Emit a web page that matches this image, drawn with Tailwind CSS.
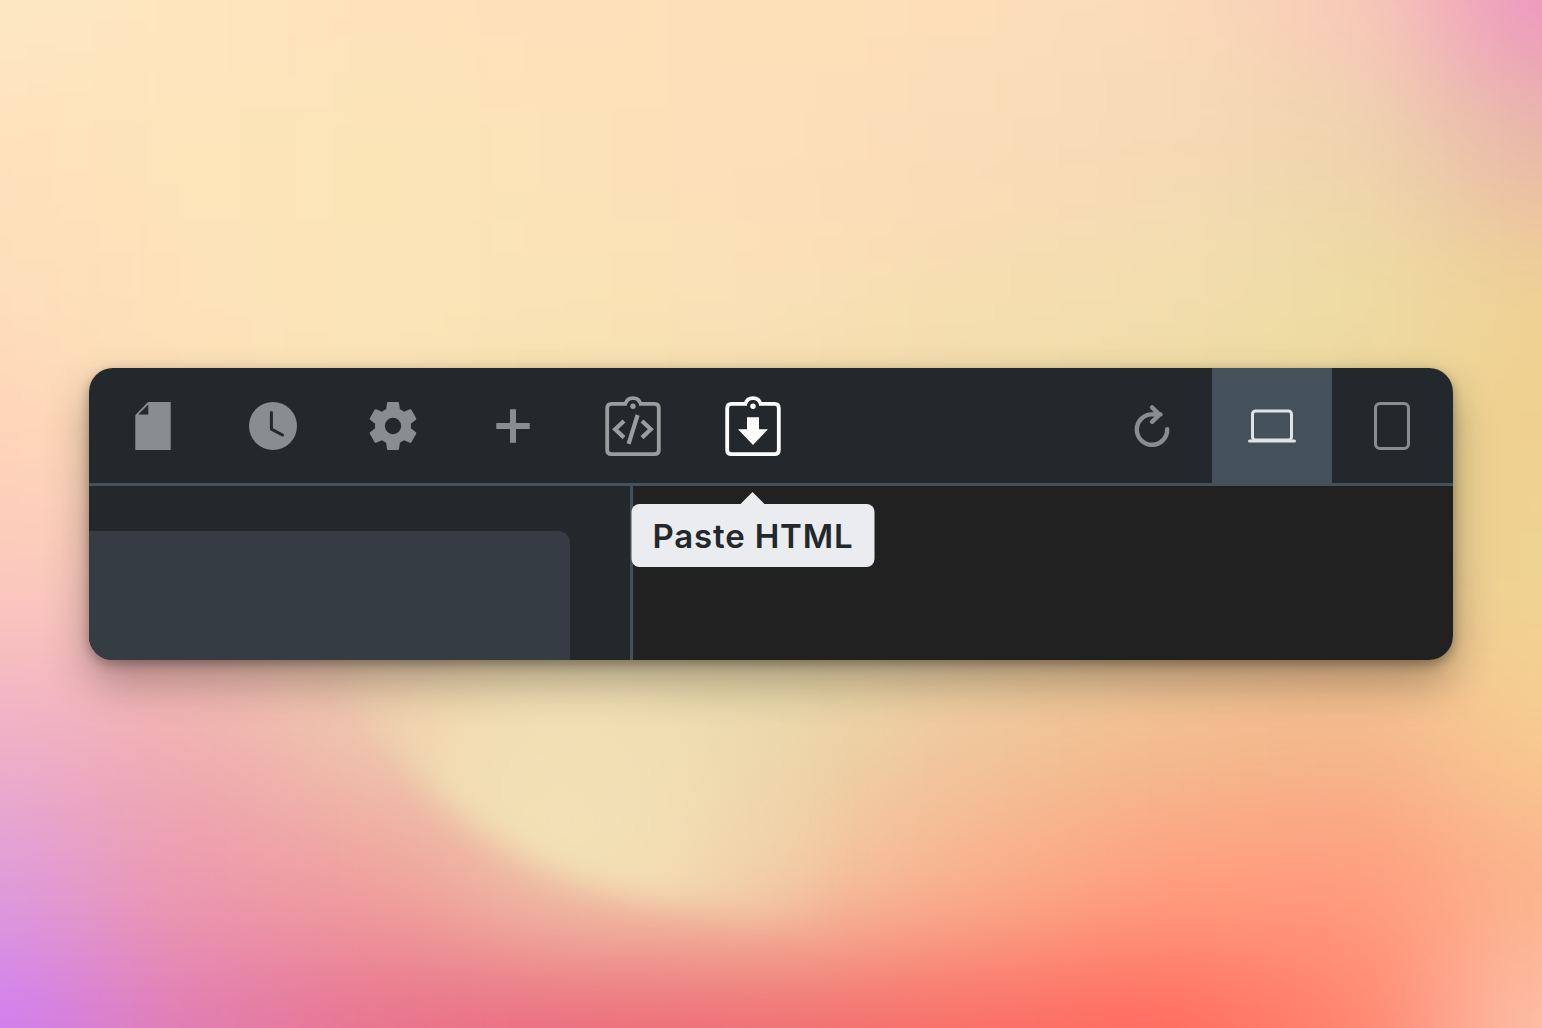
<!DOCTYPE html>
<html lang="en">
<head>
<meta charset="utf-8">
<meta name="viewport" content="width=device-width, initial-scale=1">
<title>Paste HTML</title>
<script src="https://cdn.jsdelivr.net/npm/@tailwindcss/browser@4"></script>
</head>
<body class="relative isolate flex min-h-screen items-center overflow-hidden bg-[#f5dfb0] px-[89px] font-[Inter,sans-serif]">

<!-- Gradient mesh backdrop: coarse colour cells melted together by a blur -->
<svg class="absolute inset-0 -z-10 size-full" viewBox="0 0 1542 1028" preserveAspectRatio="none" aria-hidden="true">
  <defs>
    <filter id="mesh" filterUnits="userSpaceOnUse" x="-400" y="-400" width="2342" height="1828" color-interpolation-filters="sRGB"><feGaussianBlur stdDeviation="70 56"/></filter>
    <filter id="soft" filterUnits="userSpaceOnUse" x="0" y="500" width="1542" height="528" color-interpolation-filters="sRGB"><feGaussianBlur stdDeviation="15"/></filter>
    <radialGradient id="cream" gradientUnits="userSpaceOnUse" cx="560" cy="820" r="290">
      <stop offset="0" stop-color="#f2e2b6"/><stop offset=".4" stop-color="#f3dfb4" stop-opacity=".85"/><stop offset="1" stop-color="#efd6ac" stop-opacity="0"/>
    </radialGradient>
  </defs>
  <g id="cells" filter="url(#mesh)"></g>
  <path filter="url(#soft)" fill="url(#cream)" d="M330 660C380 740 420 785 470 822C530 866 590 888 650 900C720 912 780 925 860 930L960 640Z"/>
</svg>

<main class="relative w-full rounded-3xl shadow-[0_22px_44px_rgba(0,0,0,0.3),0_4px_12px_rgba(0,0,0,0.3)]">
  <div role="toolbar" aria-label="Editor" class="relative z-10 flex h-[118px] rounded-t-3xl border-b-3 border-[#44505a] bg-[#23282c] pr-px pl-1 text-[#8a8d8f]">
    <button type="button" aria-label="Pages" class="flex w-30 items-center justify-center">
      <svg class="size-12" viewBox="0 0 48 48" fill="currentColor"><path fill-rule="evenodd" d="M19 0H41.7V48H6.3V13ZM19.3 2.6V12.6H9.3Z"/></svg>
    </button>
    <button type="button" aria-label="History" class="flex w-30 items-center justify-center">
      <svg class="size-12" viewBox="0 0 48 48"><circle cx="24" cy="24" r="24" fill="currentColor"/><path d="M22.4 10.5V27.2L33.5 33" fill="none" stroke="#23282c" stroke-width="3" stroke-linecap="round" stroke-linejoin="round"/></svg>
    </button>
    <button type="button" aria-label="Settings" class="flex w-30 items-center justify-center">
      <svg class="size-12" viewBox="2 2 20 20" fill="currentColor"><path fill-rule="evenodd" d="M19.43 12.98c.04-.32.07-.64.07-.98s-.03-.66-.07-.98l2.11-1.65c.19-.15.24-.42.12-.64l-2-3.46c-.12-.22-.39-.3-.61-.22l-2.49 1c-.52-.4-1.08-.73-1.69-.98l-.38-2.65C14.46 2.18 14.25 2 14 2h-4c-.25 0-.46.18-.49.42l-.38 2.65c-.61.25-1.17.59-1.69.98l-2.49-1c-.23-.09-.49 0-.61.22l-2 3.46c-.13.22-.07.49.12.64l2.11 1.65c-.04.32-.07.65-.07.98s.03.66.07.98l-2.11 1.65c-.19.15-.24.42-.12.64l2 3.46c.12.22.39.3.61.22l2.49-1c.52.4 1.08.73 1.69.98l.38 2.65c.03.24.24.42.49.42h4c.25 0 .46-.18.49-.42l.38-2.65c.61-.25 1.17-.59 1.69-.98l2.49 1c.23.09.49 0 .61-.22l2-3.46c.12-.22.07-.49-.12-.64l-2.11-1.65zM12 15.4a3.4 3.4 0 1 1 0-6.8 3.4 3.4 0 0 1 0 6.8z"/></svg>
    </button>
    <button type="button" aria-label="Add" class="flex w-30 items-center justify-center">
      <svg class="size-12" viewBox="0 0 48 48" fill="currentColor"><path d="M21 7.3h6V21h13.7v6H27v13.7h-6V27H7.3v-6H21z"/></svg>
    </button>
    <button type="button" aria-label="Copy HTML" class="flex w-30 items-center justify-center text-[#9a9c9e]">
      <svg class="h-15 w-14" viewBox="0 0 56 60" fill="none" stroke="currentColor" stroke-width="3.8"><path d="M20.5 7.8H6.5Q2.2 7.8 2.2 12V54Q2.2 58.1 6.5 58.1H49.5Q53.8 58.1 53.8 54V12Q53.8 7.8 49.5 7.8H35.5C34.6 4.4 31.6 2.1 28 2.1S21.4 4.4 20.5 7.8Z"/><circle cx="28" cy="10.2" r="6" fill="#23282c" stroke="none"/><circle cx="28" cy="10.2" r="2.7" fill="currentColor" stroke="none"/><path stroke-width="4.2" d="M19 25L10.2 33.3L19 41.6M37 25L45.8 33.3L37 41.6M32.6 19L23.6 47.8"/></svg>
    </button>
    <div class="relative flex">
      <button type="button" aria-describedby="tip" aria-label="Paste HTML" class="flex w-30 items-center justify-center text-white">
        <svg class="h-15 w-14" viewBox="0 0 56 60" fill="none" stroke="currentColor" stroke-width="3.8"><path d="M20.5 7.8H6.5Q2.2 7.8 2.2 12V54Q2.2 58.1 6.5 58.1H49.5Q53.8 58.1 53.8 54V12Q53.8 7.8 49.5 7.8H35.5C34.6 4.4 31.6 2.1 28 2.1S21.4 4.4 20.5 7.8Z"/><circle cx="28" cy="10.2" r="6" fill="#23282c" stroke="none"/><circle cx="28" cy="10.2" r="2.7" fill="currentColor" stroke="none"/><path fill="currentColor" stroke="none" d="M22 21.3H34V33.3H43L28 49L13 33.3H22Z"/></svg>
      </button>
      <div id="tip" role="tooltip" class="absolute top-[136px] left-1/2 -translate-x-1/2 rounded-lg bg-[#ebecf0] px-[21px] pt-[13px] pb-[11px] text-[33px] leading-[39px] font-semibold tracking-wide whitespace-nowrap text-[#23282c]">
        <svg class="absolute bottom-full left-1/2 h-3 w-6 -translate-x-1/2" viewBox="0 0 24 12" aria-hidden="true"><path fill="#ebecf0" d="M0 12L12 0L24 12Z"/></svg>
        Paste HTML
      </div>
    </div>
    <button type="button" aria-label="Refresh" class="ml-auto flex w-30 items-center justify-center">
      <svg class="size-12" viewBox="0 0 48 48" fill="none" stroke="currentColor" stroke-width="4.4" stroke-linecap="round" stroke-linejoin="round"><path d="M39.2 27.2A15.2 15.2 0 1 1 24 12.4H32.5M24 5.4L31.5 12.6L24 19.8"/></svg>
    </button>
    <button type="button" aria-label="Desktop view" aria-pressed="true" class="flex w-30 items-center justify-center bg-[#44505a] text-[#dfe3e6]">
      <svg class="size-12" viewBox="0 0 48 48" fill="none" stroke="currentColor" stroke-width="3"><rect x="4.5" y="9" width="39" height="29" rx="3"/><path stroke-linecap="round" d="M1.5 39H46.5"/></svg>
    </button>
    <button type="button" aria-label="Tablet view" class="flex w-30 items-center justify-center">
      <svg class="size-12" viewBox="0 0 48 48" fill="none" stroke="currentColor" stroke-width="3"><rect x="7.5" y="1.5" width="33" height="45" rx="4.5"/></svg>
    </button>
  </div>
  <div class="flex h-[174px] overflow-hidden rounded-b-3xl bg-[#212121]">
    <aside class="flex w-[544px] border-r-3 border-[#44505a] bg-[#23282c] pt-[45px] pr-15">
      <div class="flex-1 rounded-tr-xl bg-[#353c43]"></div>
    </aside>
    <section class="flex-1" aria-label="Canvas"></section>
  </div>
</main>

<script>
  const rows = [
    'fde8c4 fee5bf fee2bc fee1ba fde0b8 fddeb9 fcdbb9 f8cbb8 ed94c0',
    'fee2bc fde4b9 fbe5b7 fce2b8 fddfb9 fbdcb9 f6dab6 efd5ae e8b8a8',
    'fedebb fde3b9 fbe5b8 fae3b6 fae0b7 f6deb0 f3deae eedca4 efd193',
    'fed3b9 fcdfb7 fae4b6 f5dfae f4deae efdca8 ecd9a0 ecd79c f0cf8e',
    'fbc8be f9c8b8 f0d5b0 ebdcae eadcae e8daa8 ebd0a0 efcb98 efd592',
    'f0b0c8 efb0b0 efc8ac e8deb0 ead9ac f0c79c f2be90 f4b88c f8cc92',
    'de9ddc ee9aac f0a29c f0c8a8 f4cca6 f9b28e ffa080 ff9c7e fbb48c',
    'ce7ef4 e27cb0 e9718c ec6a7c ef6c72 fa6c66 ff685e ff826e fdc2aa'
  ].map(r => r.split(' '));
  const w = 193, h = 147, cells = document.getElementById('cells');
  for (let r = -2; r < rows.length + 2; r++) for (let c = -2; c < 11; c++) {
    const rect = document.createElementNS('http://www.w3.org/2000/svg', 'rect');
    const row = rows[Math.min(Math.max(r, 0), rows.length - 1)];
    rect.setAttribute('x', (c - .5) * w);
    rect.setAttribute('y', (r - .5) * h);
    rect.setAttribute('width', w + 1);
    rect.setAttribute('height', h + 1);
    rect.setAttribute('fill', '#' + row[Math.min(Math.max(c, 0), 8)]);
    cells.append(rect);
  }
</script>
</body>
</html>
